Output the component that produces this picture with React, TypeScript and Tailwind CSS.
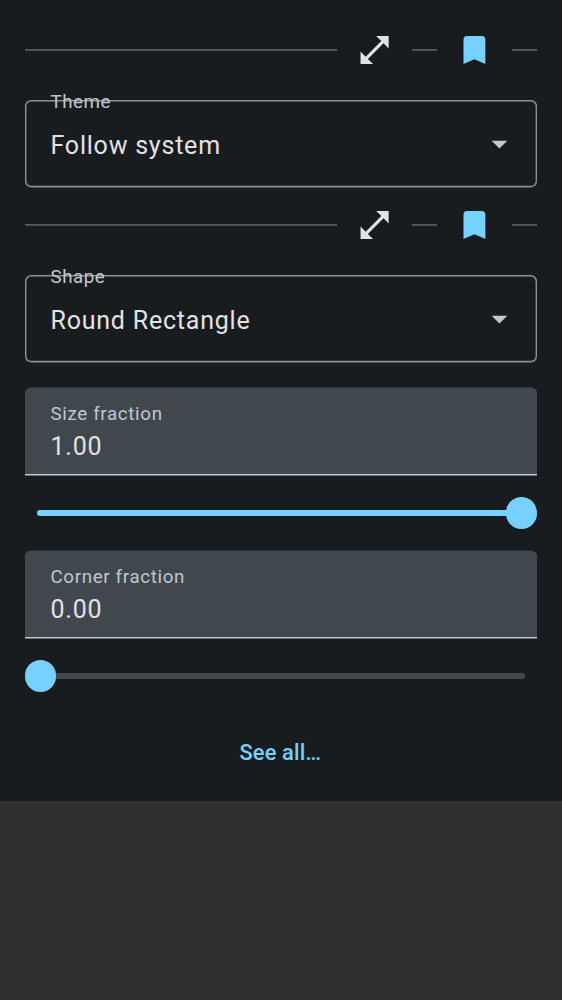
import React from "react";

function Rule({ className }: { className: string }) {
  return (
    <div className={`flex flex-col ${className}`}>
      <div className="h-px bg-[#56595c]" />
      <div className="h-px bg-[#4a4e51]" />
    </div>
  );
}

function SectionHeader() {
  return (
    <div className="flex h-[75px] items-center">
      <Rule className="w-[312px]" />
      <button className="flex h-[75px] w-[75px] items-center justify-center" aria-label="Expand">
        <svg viewBox="0.1 -0.15 24 24" className="h-[37.5px] w-[37.5px] fill-[#e2e2e5]">
          <path d="M21 11V3h-8l3.29 3.29-10 10L3 13v8h8l-3.29-3.29 10-10z" />
        </svg>
      </button>
      <Rule className="w-[25px]" />
      <button className="flex h-[75px] w-[75px] items-center justify-center" aria-label="Bookmark">
        <svg viewBox="0.2 -0.15 24 24" className="h-[37.5px] w-[37.5px] fill-[#76d1ff]">
          <path d="M17 3H7c-1.1 0-2 .9-2 2v16l7-3 7 3V5c0-1.1-.9-2-2-2z" />
        </svg>
      </button>
      <Rule className="w-[25px]" />
    </div>
  );
}

function SelectField({ label, value }: { label: string; value: string }) {
  return (
    <div className="relative mt-[12.5px] mb-[0.5px] flex h-[87px] items-center justify-between rounded-[6.25px] pr-[19px] pl-[25.5px] shadow-[inset_0_0.2px_0_1.4px_#8b9198,0_0.5px_0_0_#8b9198]">
      <span className="absolute top-[-10px] left-[25.5px] text-[18.75px] leading-[25px] tracking-[0.5px] text-[#c0c7cd]">
        {label}
      </span>
      <span className="pt-[4px] text-[25px] leading-[37px] tracking-[0.78px] text-[#e2e2e5]">{value}</span>
      <svg viewBox="0.2 0 24 24" className="h-[37.5px] w-[37.5px] fill-[#c0c7cd]">
        <path d="M7 10l5 5 5-5z" />
      </svg>
    </div>
  );
}

function NumberField({ label, value }: { label: string; value: string }) {
  return (
    <div className="flex h-[87px] flex-col rounded-t-[6.25px] bg-[#41484d] pt-[14px] pl-[25.5px] shadow-[inset_0_-1px_0_#c0c7cd,0_-0.5px_0_#41484d,0_0.6px_0_#c0c7cd]">
      <span className="text-[18.75px] leading-[25px] tracking-[0.65px] text-[#c0c7cd]">{label}</span>
      <span className="text-[25px] leading-[39px] tracking-[0.78px] text-[#e2e2e5]">{value}</span>
    </div>
  );
}

function Slider({ full }: { full: boolean }) {
  return (
    <div className="relative flex h-[76px] items-center pr-[12.5px] pl-[12.4px]">
      <div className={`h-[6px] w-full rounded-full ${full ? "bg-[#76d1ff]" : "bg-[#41484d]"}`} />
      <div
        className={`absolute top-[22.4px] h-[31.25px] w-[31.25px] rounded-full bg-[#76d1ff] ${full ? "right-0" : "left-0"}`}
      />
    </div>
  );
}

export default function App() {
  return (
    <div className="h-[1000px] w-[562px] bg-[#303030] font-[Roboto,sans-serif]">
      <main className="flex h-[801px] flex-col bg-[#191c1e] px-[25px] pt-[12.5px]">
        <SectionHeader />
        <SelectField label="Theme" value="Follow system" />
        <SectionHeader />
        <SelectField label="Shape" value="Round Rectangle" />
        <div className="mt-[25.5px] flex flex-col">
          <NumberField label="Size fraction" value="1.00" />
          <Slider full />
          <NumberField label="Corner fraction" value="0.00" />
          <Slider full={false} />
        </div>
        <button className="flex h-[75px] items-center justify-center pt-[3px] pr-[1.5px] text-[21.875px] font-medium tracking-[0.156px] text-[#76d1ff]">
          See all…
        </button>
      </main>
    </div>
  );
}
